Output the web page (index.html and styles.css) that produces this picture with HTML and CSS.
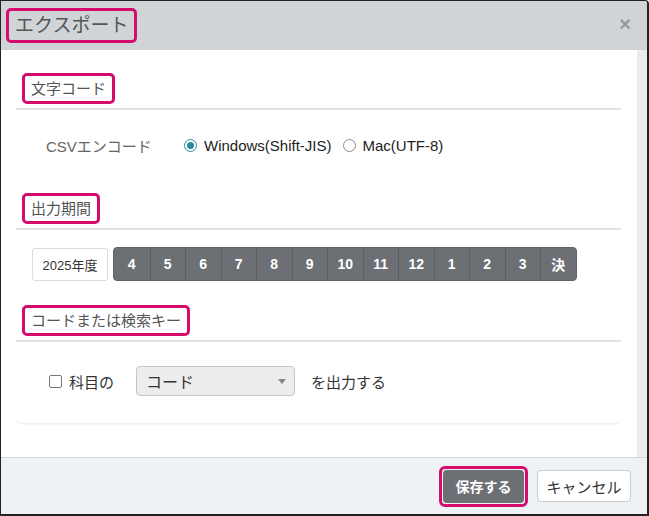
FILE: index.html
```html
<!DOCTYPE html>
<html lang="ja">
<head>
<meta charset="utf-8">
<link rel="stylesheet" href="styles.css">
</head>
<body>
<div class="dialog">
  <div class="dlg-head">
    <span class="mark title">エクスポート</span>
    <span class="close">×</span>
  </div>
  <div class="dlg-body">
    <div class="content">
      <div class="section">
        <div class="sec-head first"><span class="mark sec-title">文字コード</span></div>
        <div class="sec-body s1">
          <div class="enc-row">
            <span class="enc-label">CSVエンコード</span>
            <span class="radio on"></span><span class="opt">Windows(Shift-JIS)</span>
            <span class="radio"></span><span class="opt">Mac(UTF-8)</span>
          </div>
        </div>
      </div>
      <div class="section">
        <div class="sec-head"><span class="mark sec-title">出力期間</span></div>
        <div class="sec-body s2">
          <div class="period-row">
            <span class="year">2025年度</span>
            <div class="months">
              <span class="m">4</span><span class="m">5</span><span class="m">6</span><span class="m">7</span><span class="m">8</span><span class="m">9</span><span class="m">10</span><span class="m">11</span><span class="m">12</span><span class="m">1</span><span class="m">2</span><span class="m">3</span><span class="m">決</span>
            </div>
          </div>
        </div>
      </div>
      <div class="section panel">
        <div class="sec-head"><span class="mark sec-title">コードまたは検索キー</span></div>
        <div class="sec-body s3">
          <div class="key-row">
            <span class="check"></span>
            <span class="kamoku">科目の</span>
            <span class="select"><span>コード</span><span class="caret"></span></span>
            <span class="out">を出力する</span>
          </div>
        </div>
      </div>
    </div>
    <div class="scroll"></div>
  </div>
  <div class="dlg-foot">
    <span class="save-mark"><span class="btn save">保存する</span></span>
    <span class="btn cancel">キャンセル</span>
  </div>
</div>
</body>
</html>
```
FILE: styles.css
```css
* { box-sizing: border-box; }
html, body { margin: 0; padding: 0; background: #fff; }
body {
  font-family: "Liberation Sans", "Noto Sans CJK JP", sans-serif;
  color: #333;
}
.dialog {
  width: 649px;
  height: 516px;
  border: 1px solid #222;
  border-right-width: 2px;
  border-bottom-width: 2px;
  border-top-right-radius: 4px;
  display: flex;
  flex-direction: column;
  overflow: hidden;
}
.mark {
  border: 3px solid #d60c6c;
  border-radius: 5px;
  background: transparent;
  display: inline-block;
}
.dlg-head {
  height: 49px;
  background: #d0d4d7;
  display: flex;
  align-items: center;
  justify-content: space-between;
  padding: 0 16px 0 5px;
  flex: none;
}
.title {
  font-size: 19px;
  line-height: 23px;
  padding: 3px 6px;
  color: #555;
  margin-top: 0;
}
.close {
  font-size: 20px;
  font-weight: bold;
  color: #999;
  line-height: 20px;
  margin-top: -4px;
}
.dlg-body {
  flex: 1;
  display: flex;
  background: #fff;
}
.content {
  flex: 1;
  padding: 0 16px 0 15px;
}
.scroll {
  width: 10px;
  background: #ececec;
  flex: none;
}
.sec-head {
  height: 42px;
  border-bottom: 2px solid #e2e2e2;
  display: flex;
  align-items: center;
  padding-left: 6px;
}
.sec-head.first { margin-top: 18px; }
.sec-title {
  font-size: 15px;
  line-height: 19px;
  padding: 3px 6px;
  color: #555;
}
.s1 { padding: 18px 0 26px 30px; }
.enc-row {
  height: 34px;
  display: flex;
  align-items: center;
  font-size: 15px;
}
.enc-label { width: 138px; color: #666; }
.radio {
  width: 13px;
  height: 13px;
  border: 1px solid #8a8a8a;
  border-radius: 50%;
  display: inline-flex;
  align-items: center;
  justify-content: center;
  margin-right: 7px;
}
.radio.on { border-color: #2b8b9a; }
.radio.on::after {
  content: "";
  width: 7px;
  height: 7px;
  border-radius: 50%;
  background: #2b8b9a;
}
.opt { color: #222; margin-right: 11px; }
.s2 { padding: 17px 0 19px 16px; }
.period-row { display: flex; align-items: center; }
.year {
  width: 76px;
  height: 33px;
  border: 1px solid #ddd;
  border-radius: 3px;
  font-size: 13px;
  display: flex;
  align-items: center;
  justify-content: center;
  color: #333;
  margin-right: 5px;
}
.months {
  display: flex;
  background: #6c7074;
  border: 1px solid #5f6367;
  border-radius: 4px;
  height: 34px;
  overflow: hidden;
}
.m {
  width: 35.5px;
  display: flex;
  align-items: center;
  justify-content: center;
  color: #fff;
  font-weight: bold;
  font-size: 14px;
  border-left: 1px solid #5c6064;
}
.m:first-child { border-left: none; }
.panel .sec-body {
  border-bottom: 1px solid #f0f0f0;
  border-radius: 0 0 6px 6px;
  box-shadow: 0 1px 1px rgba(0,0,0,0.04);
}
.s3 { padding: 24px 0 27px 33px; }
.key-row {
  height: 30px;
  display: flex;
  align-items: center;
  font-size: 15px;
  color: #333;
}
.check {
  width: 13px;
  height: 13px;
  border: 1px solid #777;
  border-radius: 2px;
  margin-right: 7px;
}
.kamoku { width: 67px; }
.select {
  width: 159px;
  height: 30px;
  background: #ededed;
  border: 1px solid #c6c6c6;
  border-radius: 4px;
  display: flex;
  align-items: center;
  justify-content: space-between;
  padding: 0 8px 0 9px;
  font-size: 16px;
  color: #333;
  margin-right: 16px;
}
.caret {
  width: 0;
  height: 0;
  border-left: 4px solid transparent;
  border-right: 4px solid transparent;
  border-top: 5px solid #888;
}
.dlg-foot {
  height: 57px;
  flex: none;
  background: #eef2f5;
  border-top: 1px solid #d6d9dc;
  display: flex;
  align-items: center;
  justify-content: flex-end;
  padding-right: 16px;
  gap: 9px;
}
.save-mark {
  border: 3px solid #d60c6c;
  border-radius: 6px;
  padding: 1px;
  display: flex;
}
.btn {
  height: 33px;
  border-radius: 4px;
  display: flex;
  align-items: center;
  justify-content: center;
  font-size: 15px;
}
.save {
  width: 81px;
  background: #6c7074;
  color: #fff;
  font-weight: bold;
  font-size: 14px;
}
.cancel {
  width: 94px;
  height: 32px;
  background: #fff;
  border: 1px solid #ccc;
  color: #333;
}
```
